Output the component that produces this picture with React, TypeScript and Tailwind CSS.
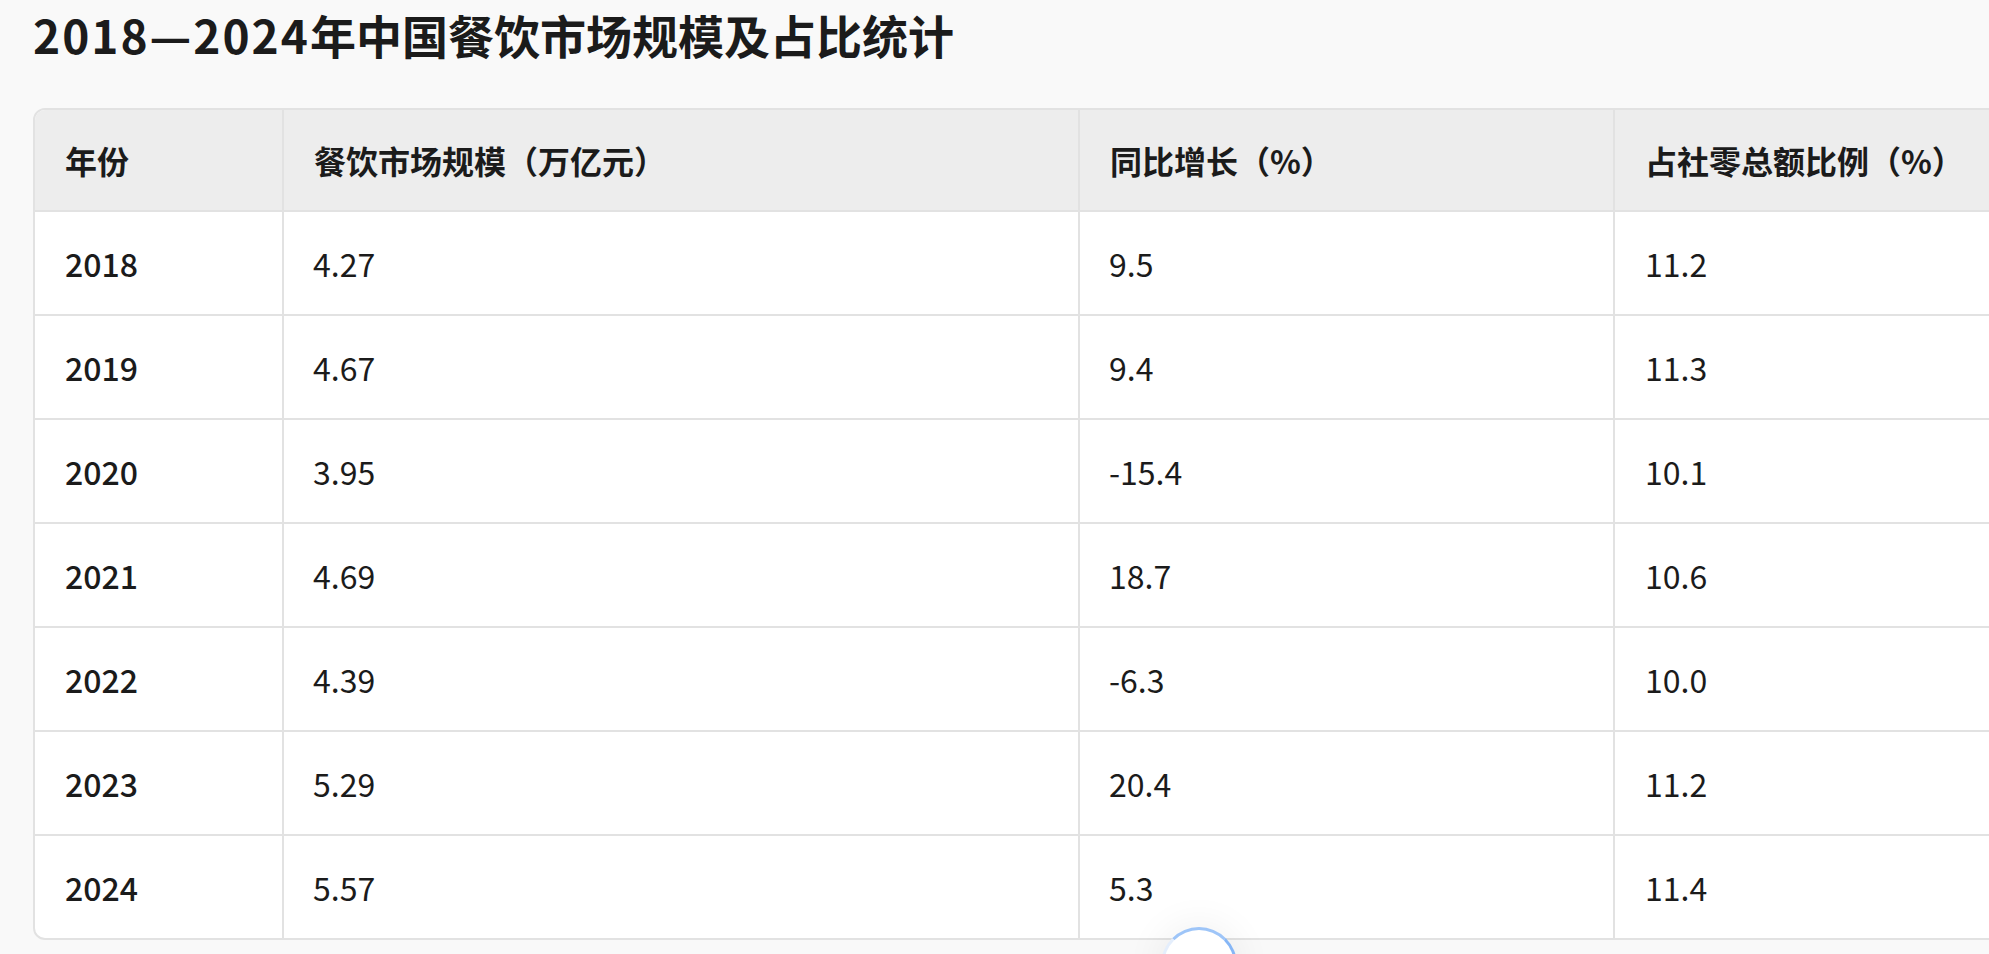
const rows = [
  { year: "2018", size: "4.27", growth: "9.5", share: "11.2" },
  { year: "2019", size: "4.67", growth: "9.4", share: "11.3" },
  { year: "2020", size: "3.95", growth: "-15.4", share: "10.1" },
  { year: "2021", size: "4.69", growth: "18.7", share: "10.6" },
  { year: "2022", size: "4.39", growth: "-6.3", share: "10.0" },
  { year: "2023", size: "5.29", growth: "20.4", share: "11.2" },
  { year: "2024", size: "5.57", growth: "5.3", share: "11.4" },
];

const headers = ["年份", "餐饮市场规模（万亿元）", "同比增长（%）", "占社零总额比例（%）"];

const grid = "grid grid-cols-[247px_796px_535px_580px]";

const App = () => {
  return (
    <div className="relative h-screen w-full overflow-hidden bg-[#f9f9f9] font-['Noto_Sans_CJK_SC',sans-serif] text-[#1b1b1b]">
      <div className="pl-[33px] pt-[7px]">
        <h1 className="text-[46px] font-bold leading-[55px]">
          <span className="font-semibold tracking-[2px]">2018—2024</span>年中国餐饮市场规模及占比统计
        </h1>

        <div className="mt-[46px] w-[2160px] overflow-hidden rounded-[12px] border-2 border-[#e2e2e2] bg-white">
          <div className={`${grid} h-[102px] border-b-2 border-[#e2e2e2] bg-[#ededed] text-[32px] font-bold`}>
            {headers.map((h, i) => (
              <div
                key={h}
                className={`flex items-center px-[30px] ${i > 0 ? "border-l-2 border-[#e2e2e2]" : ""}`}
              >
                {h}
              </div>
            ))}
          </div>

          {rows.map((r, idx) => (
            <div
              key={r.year}
              className={`${grid} text-[32px] ${
                idx < rows.length - 1 ? "h-[104px] border-b-2 border-[#e2e2e2]" : "h-[102px]"
              }`}
            >
              <div className="flex items-center px-[30px] font-medium">{r.year}</div>
              <div className="flex items-center border-l-2 border-[#e2e2e2] px-[29px]">{r.size}</div>
              <div className="flex items-center border-l-2 border-[#e2e2e2] px-[29px]">{r.growth}</div>
              <div className="flex items-center border-l-2 border-[#e2e2e2] px-[30px]">{r.share}</div>
            </div>
          ))}
        </div>
      </div>

      {/* floating button peeking from the bottom */}
      <div className="absolute left-[1161px] top-[927px] h-[76px] w-[76px] rounded-full border-[3px] border-t-[#9ec5f8] border-r-[#86b6f6] border-b-white border-l-[#e4eefc] bg-white shadow-[0_0_40px_rgba(0,0,0,0.07)]" />
    </div>
  );
};

export default App;
